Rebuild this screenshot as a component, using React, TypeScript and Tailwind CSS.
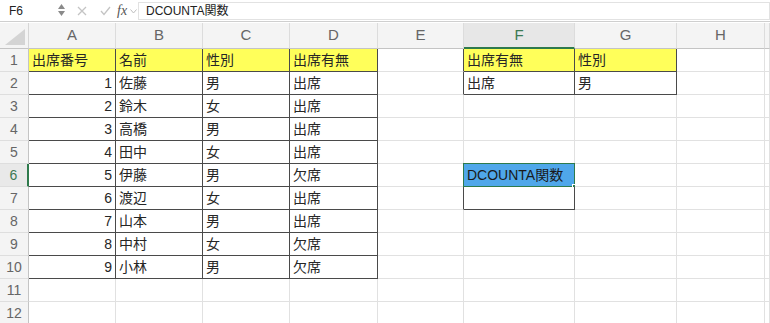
import React from 'react';

const FONT = '"Liberation Sans", "Noto Sans CJK JP", sans-serif';

const COLS = ['A', 'B', 'C', 'D', 'E', 'F', 'G', 'H', ''];

const names = ['佐藤', '鈴木', '高橋', '田中', '伊藤', '渡辺', '山本', '中村', '小林'];
const genders = ['男', '女', '男', '女', '男', '女', '男', '女', '男'];
const attend = ['出席', '出席', '出席', '出席', '欠席', '出席', '出席', '欠席', '欠席'];

type Cell = { text?: string; right?: boolean; yellow?: boolean };

// row 1..12, col 0..8
function getCell(r: number, c: number): Cell {
  if (r === 1) {
    if (c === 0) return { text: '出席番号', yellow: true };
    if (c === 1) return { text: '名前', yellow: true };
    if (c === 2) return { text: '性別', yellow: true };
    if (c === 3) return { text: '出席有無', yellow: true };
    if (c === 5) return { text: '出席有無', yellow: true };
    if (c === 6) return { text: '性別', yellow: true };
  }
  if (r >= 2 && r <= 10) {
    const i = r - 2;
    if (c === 0) return { text: String(i + 1), right: true };
    if (c === 1) return { text: names[i] };
    if (c === 2) return { text: genders[i] };
    if (c === 3) return { text: attend[i] };
  }
  if (r === 2 && c === 5) return { text: '出席' };
  if (r === 2 && c === 6) return { text: '男' };
  return {};
}

function isDark(r: number, c: number) {
  if (r >= 1 && r <= 10 && c <= 3) return true;
  if (r >= 1 && r <= 2 && (c === 5 || c === 6)) return true;
  if (r === 7 && c === 5) return true;
  return false;
}

function darkRight(r: number, c: number) {
  if (isDark(r, c)) return true;
  if (c === 4 && (r === 1 || r === 2 || r === 7)) return true;
  return false;
}

function GridCell({ r, c }: { r: number; c: number }) {
  const cell = getCell(r, c);
  const selected = r === 6 && c === 5;
  const bg = selected ? 'bg-[#4fa7ea]' : cell.yellow ? 'bg-[#ffff5a]' : 'bg-white';
  const br = darkRight(r, c) ? 'border-r-[#4a4a4a]' : 'border-r-[#e1e1e1]';
  const bb = isDark(r, c) ? 'border-b-[#4a4a4a]' : 'border-b-[#e1e1e1]';
  return (
    <div
      className={`relative flex items-center border-r border-b ${br} ${bb} ${bg} text-[14px] text-[#262626] ${
        cell.right ? 'justify-end pr-[3px]' : 'pl-[3px]'
      }`}
    >
      {selected && (
        <>
          <span className="relative text-[#1a1a1a]">DCOUNTA関数</span>
          <div className="absolute -left-px -top-px -right-px -bottom-px border-[1.5px] border-[#2e7a4c]" />
          <div className="absolute -right-[3px] -bottom-[3px] w-[5px] h-[5px] bg-[#2e7a4c] border border-white" />
        </>
      )}
      {!selected && cell.text}
    </div>
  );
}

function TopBar() {
  return (
    <div className="h-[22px] flex items-center bg-white border-b border-[#cfcfcf] text-[12px] text-[#222]">
      <div className="w-[68px] shrink-0 h-[19px] flex items-center pl-[9px] relative">
        <span>F6</span>
        <div className="absolute left-[58px] top-[3px] flex flex-col items-center leading-none">
          <svg width="7" height="5" viewBox="0 0 7 5"><path d="M0 5 L3.5 0 L7 5 Z" fill="#8a8a8a" /></svg>
          <svg width="7" height="5" viewBox="0 0 7 5" className="mt-[2px]"><path d="M0 0 L3.5 5 L7 0 Z" fill="#8a8a8a" /></svg>
        </div>
      </div>
      <div className="flex items-center w-[70px] shrink-0 h-full">
        <svg width="10" height="10" viewBox="0 0 10 10" className="ml-[9px] shrink-0">
          <path d="M1 1 L9 9 M9 1 L1 9" stroke="#c4c4c4" strokeWidth="1.3" />
        </svg>
        <svg width="11" height="10" viewBox="0 0 11 10" className="ml-[13px] shrink-0">
          <path d="M1 5 L4 8.5 L10 1" stroke="#c4c4c4" strokeWidth="1.3" fill="none" />
        </svg>
        <span className="ml-[6px] italic text-[14px] text-[#555]" style={{ fontFamily: '"Liberation Serif", serif' }}>
          fx
        </span>
        <svg width="7" height="5" viewBox="0 0 7 5" className="ml-[3px] mt-[2px] shrink-0">
          <path d="M0.5 0.5 L3.5 4 L6.5 0.5" stroke="#bdbdbd" fill="none" />
        </svg>
      </div>
      <div className="flex-1 h-[18px] border border-[#e2e2e2] flex items-center pl-[7px]">DCOUNTA関数</div>
    </div>
  );
}

export default function App() {
  const rows = Array.from({ length: 12 }, (_, i) => i + 1);
  return (
    <div className="w-[770px] h-[323px] overflow-hidden bg-white" style={{ fontFamily: FONT }}>
      <TopBar />
      <div className="h-px bg-white" />
      <div className="grid grid-cols-[29px_87px_87px_87px_88px_86px_111px_102px_88px_1fr] grid-rows-[26px_repeat(12,23px)]">
        {/* header row */}
        <div className="relative bg-[#f4f4f4] border-r border-b border-r-[#d6d6d6] border-b-[#c4c4c4]">
          <svg width="20" height="16" viewBox="0 0 20 16" className="absolute right-[3px] bottom-[3px]">
            <path d="M20 0 L20 16 L0 16 Z" fill="#d4d4d4" />
          </svg>
        </div>
        {COLS.map((l, c) => {
          const sel = c === 5;
          return (
            <div
              key={'h' + c}
              className={`flex items-center justify-center text-[15px] border-r border-r-[#dcdcdc] ${
                sel
                  ? 'bg-[#e7e7e7] text-[#3b7a53] border-b-2 border-b-[#2e7a4c]'
                  : 'bg-[#f4f4f4] text-[#666] border-b border-b-[#c4c4c4]'
              }`}
            >
              {l}
            </div>
          );
        })}
        {rows.map((r) => (
          <React.Fragment key={r}>
            <div
              className={`flex items-center justify-center text-[14px] border-b border-b-[#dedede] ${
                r === 6
                  ? 'bg-[#e9e9e9] text-[#3b7a53] border-r-2 border-r-[#2e7a4c]'
                  : 'bg-[#f4f4f4] text-[#666] border-r border-r-[#c4c4c4]'
              }`}
            >
              {r}
            </div>
            {COLS.map((_, c) => (
              <GridCell key={c} r={r} c={c} />
            ))}
          </React.Fragment>
        ))}
      </div>
    </div>
  );
}
